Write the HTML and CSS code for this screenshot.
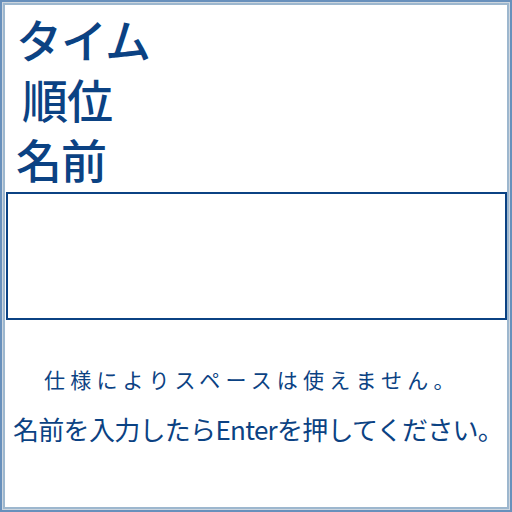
FILE: index.html
```html
<!DOCTYPE html>
<html lang="ja">
<head>
<meta charset="utf-8">
<link rel="stylesheet" href="styles.css">
</head>
<body>
<div class="frame">
  <div class="titles">
    <div class="t t1">タイム</div>
    <div class="t t2">順位</div>
    <div class="t t3">名前</div>
  </div>
  <div class="box"></div>
  <p class="note">仕様によりスペースは使えません。</p>
  <p class="prompt">名前を入力したらEnterを押してください。</p>
</div>
</body>
</html>
```
FILE: styles.css
```css
html, body {
  margin: 0;
  padding: 0;
  background: #ffffff;
}
.frame {
  width: 512px;
  height: 512px;
  box-sizing: border-box;
  padding: 5px 5px 5px 5px;
  box-shadow: inset 0 0 0 2px #6890bc, inset 0 0 0 3px #cdd6df, inset 0 0 0 5px #9db7ce;
  font-family: "Noto Sans CJK JP", "Liberation Sans", sans-serif;
  color: #0b4283;
  display: flex;
  flex-direction: column;
}
.titles {
  padding: 3px 0 0 11px;
  height: 184px;
  box-sizing: border-box;
}
.t {
  font-size: 46px;
  font-weight: 500;
  line-height: 60px;
  height: 60px;
  letter-spacing: -1px;
  white-space: nowrap;
}
.t2 {
  padding-left: 6px;
}
.box {
  margin: 3px 0 0 1px;
  height: 128px;
  box-sizing: border-box;
  border: 2px solid #0b4283;
}
.note {
  margin: 46px 0 0 39px;
  font-size: 21px;
  line-height: 26px;
  letter-spacing: 5.2px;
  white-space: nowrap;
}
.prompt {
  margin: 20px 0 0 8px;
  font-size: 26px;
  line-height: 34px;
  letter-spacing: -0.7px;
  white-space: nowrap;
}
```
